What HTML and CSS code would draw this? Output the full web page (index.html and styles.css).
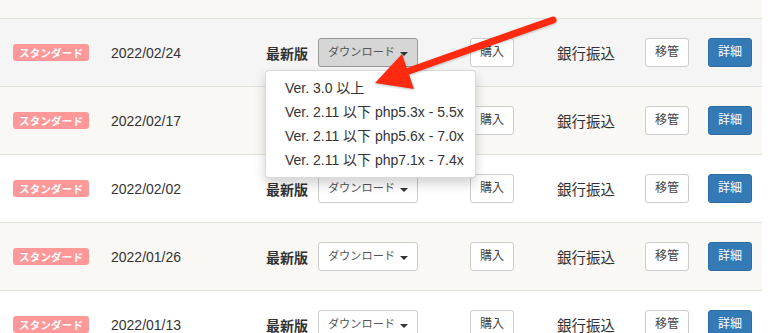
FILE: index.html
```html
<!DOCTYPE html>
<html lang="ja">
<head>
<meta charset="utf-8">
<title>Downloads</title>
<link rel="stylesheet" href="styles.css">
</head>
<body>
<div class="page">
  <div class="table">
    <div class="row striped partial"></div>

    <div class="row hover">
      <div class="cell first"><span class="label">スタンダード</span></div>
      <div class="cell date">2022/02/24</div>
      <div class="cell dl">
        <span class="latest">最新版</span>
        <div class="dropdown">
          <button class="btn btn-dl active">ダウンロード<span class="caret"></span></button>
          <ul class="menu">
            <li>Ver. 3.0 以上</li>
            <li>Ver. 2.11 以下 php5.3x - 5.5x</li>
            <li>Ver. 2.11 以下 php5.6x - 7.0x</li>
            <li>Ver. 2.11 以下 php7.1x - 7.4x</li>
          </ul>
        </div>
      </div>
      <div class="cell"><button class="btn">購入</button></div>
      <div class="cell pay">銀行振込</div>
      <div class="cell"><button class="btn">移管</button></div>
      <div class="cell"><button class="btn btn-primary">詳細</button></div>
    </div>

    <div class="row striped">
      <div class="cell first"><span class="label">スタンダード</span></div>
      <div class="cell date">2022/02/17</div>
      <div class="cell dl">
        <span class="latest">最新版</span>
        <div class="dropdown"><button class="btn btn-dl">ダウンロード<span class="caret"></span></button></div>
      </div>
      <div class="cell"><button class="btn">購入</button></div>
      <div class="cell pay">銀行振込</div>
      <div class="cell"><button class="btn">移管</button></div>
      <div class="cell"><button class="btn btn-primary">詳細</button></div>
    </div>

    <div class="row">
      <div class="cell first"><span class="label">スタンダード</span></div>
      <div class="cell date">2022/02/02</div>
      <div class="cell dl">
        <span class="latest">最新版</span>
        <div class="dropdown"><button class="btn btn-dl">ダウンロード<span class="caret"></span></button></div>
      </div>
      <div class="cell"><button class="btn">購入</button></div>
      <div class="cell pay">銀行振込</div>
      <div class="cell"><button class="btn">移管</button></div>
      <div class="cell"><button class="btn btn-primary">詳細</button></div>
    </div>

    <div class="row striped">
      <div class="cell first"><span class="label">スタンダード</span></div>
      <div class="cell date">2022/01/26</div>
      <div class="cell dl">
        <span class="latest">最新版</span>
        <div class="dropdown"><button class="btn btn-dl">ダウンロード<span class="caret"></span></button></div>
      </div>
      <div class="cell"><button class="btn">購入</button></div>
      <div class="cell pay">銀行振込</div>
      <div class="cell"><button class="btn">移管</button></div>
      <div class="cell"><button class="btn btn-primary">詳細</button></div>
    </div>

    <div class="row">
      <div class="cell first"><span class="label">スタンダード</span></div>
      <div class="cell date">2022/01/13</div>
      <div class="cell dl">
        <span class="latest">最新版</span>
        <div class="dropdown"><button class="btn btn-dl">ダウンロード<span class="caret"></span></button></div>
      </div>
      <div class="cell"><button class="btn">購入</button></div>
      <div class="cell pay">銀行振込</div>
      <div class="cell"><button class="btn">移管</button></div>
      <div class="cell"><button class="btn btn-primary">詳細</button></div>
    </div>
  </div>

  <svg class="arrow" width="775" height="333" viewBox="0 0 775 333" xmlns="http://www.w3.org/2000/svg">
    <line x1="553" y1="20" x2="406" y2="72" stroke="#ff2a10" stroke-width="7" stroke-linecap="round"/>
    <polygon points="375,83 402,54 414,89" fill="#ff2a10"/>
  </svg>
</div>
</body>
</html>
```

FILE: styles.css
```css
* { box-sizing: border-box; }

html, body {
  margin: 0;
  padding: 0;
  background: #fff;
}

body {
  font-family: "Liberation Sans", "Noto Sans CJK JP", sans-serif;
  font-size: 14px;
  color: #333;
  width: 775px;
  height: 333px;
  overflow: hidden;
}

.page {
  position: relative;
  width: 775px;
  height: 333px;
  overflow: hidden;
}

.table {
  width: 762px;
}

.row {
  display: grid;
  grid-template-columns: 111px 155px 204px 87px 88px 63px 54px;
  align-items: center;
  height: 68px;
  border-top: 1px solid #e0e0dd;
  background: #fff;
}

.row.striped { background: #f9f8f5; }
.row.hover { background: #f5f5f5; }

.row.partial {
  height: 18px;
  border-top: none;
}

.cell {
  display: flex;
  align-items: center;
}

.cell.first { padding-left: 13px; }

.label {
  display: inline-block;
  background: #ff9999;
  color: #fff;
  font-weight: bold;
  font-size: 10.5px;
  line-height: 12px;
  padding: 3px 6px 2px;
  border-radius: 3px;
  letter-spacing: 0.2px;
}

.date {
  font-size: 14px;
  color: #333;
}

.dl { gap: 10px; }

.latest {
  font-weight: bold;
  font-size: 14px;
  color: #333;
  white-space: nowrap;
}

.dropdown { position: relative; }

.btn {
  font-family: "Liberation Sans", "Noto Sans CJK JP", sans-serif;
  font-size: 12px;
  line-height: 17px;
  color: #444;
  background: #fff;
  border: 1px solid #ccc;
  border-radius: 3px;
  padding: 5px 9px;
  height: 29px;
  display: inline-flex;
  align-items: center;
  justify-content: center;
  white-space: nowrap;
  cursor: pointer;
}

.btn-dl {
  width: 100px;
  padding: 5px 6px;
  font-size: 11.2px;
  color: #555;
  gap: 5px;
}

.btn-dl.active {
  background: #d6d6d6;
  border-color: #999;
}

.caret {
  display: inline-block;
  flex: none;
  width: 0;
  height: 0;
  border-top: 4px solid #333;
  border-left: 4px solid transparent;
  border-right: 4px solid transparent;
  margin-top: 2px;
}

.btn-primary {
  background: #337ab7;
  border-color: #2e6da4;
  color: #fff;
}

.pay {
  font-size: 14.5px;
  color: #333;
}

.menu {
  position: absolute;
  z-index: 5;
  top: 32px;
  left: -53px;
  width: 211px;
  margin: 0;
  padding: 5px 0;
  list-style: none;
  background: #fff;
  border: 1px solid rgba(0, 0, 0, 0.15);
  border-radius: 4px;
  box-shadow: 0 6px 12px rgba(0, 0, 0, 0.175);
}

.menu li {
  height: 24px;
  line-height: 24px;
  padding: 0 19px;
  font-size: 14px;
  color: #333;
  white-space: nowrap;
}

.arrow {
  position: absolute;
  left: 0;
  top: 0;
  z-index: 10;
  pointer-events: none;
  filter: drop-shadow(0 1px 1px rgba(0, 0, 0, 0.25));
}
```
